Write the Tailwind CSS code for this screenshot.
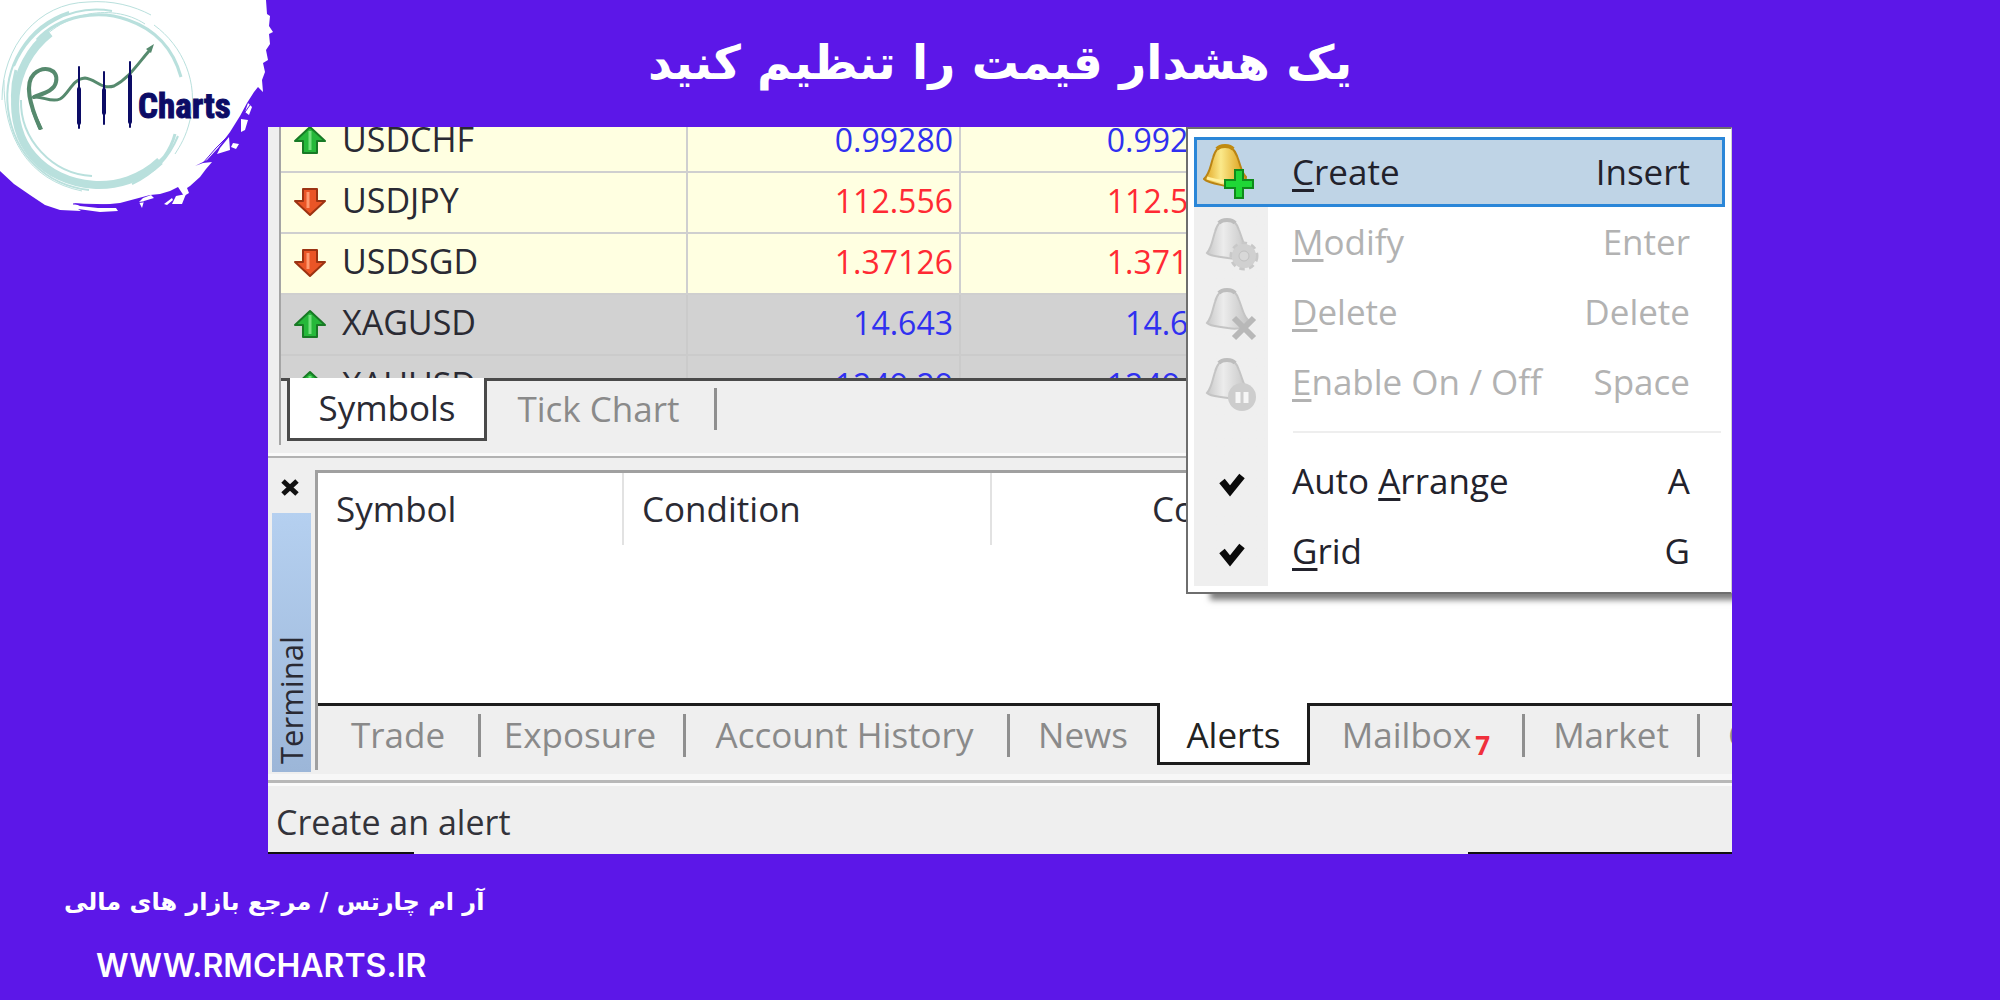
<!DOCTYPE html>
<html lang="fa">
<head>
  <meta charset="UTF-8" />
  <meta name="viewport" content="width=device-width, initial-scale=1.0" />
  <title>یک هشدار قیمت را تنظیم کنید</title>
  <script src="https://cdn.jsdelivr.net/npm/@tailwindcss/browser@4"></script>
</head>
<body class="relative flex min-h-screen flex-col overflow-x-hidden bg-[#5c17e8] font-['Open_Sans',sans-serif] text-[#2a2a33]">

  <!-- Logo -->
  <svg class="absolute left-0 top-0 h-[230px] w-[290px]" viewBox="0 0 290 230" role="img" aria-label="RM Charts">
    <path fill="#fff" d="M0 0H266L267 14L270 16L269 26L273 32L269 34L270 44L266 50L268 60L263 63L265 72L262 80L263 92L258 87L254 92L247 103L240 116L230 132L218 148L207 160L195 166L203 163L212 162L206 169L200 177L190 186L187 188L189 193L184 196L178 187L170 191L160 194L150 195L120 203L100 205L84 204L73 203L80 206L98 208L116 208L118 211L100 212L78 209L81 211L60 210L45 205L30 195L14 184L0 171Z"/>
    <path fill="#fff" d="M248 103l4 4-3 8-4-3zM241 119l7 1-3 10-4 2zM229 137l1 13-13 4 3-6zM233 143l6 1-3 5-5-2zM143 198l8-3 3 3-10 3-2 7-3-6zM164 204l8-6 1 2-6 5zM176 196l10-2-4 10-10 0z"/>
    <path d="M73 204L120 205L150 201L166 197M203 163L216 148L229 135L250 105" fill="none" stroke="#5c17e8"/>
    <g fill="none" stroke="#b9e0dd">
      <path stroke-width="8" d="M50 33C8 66 6 125 33 156C62 190 122 197 160 161"/>
      <path stroke-width="3" d="M37 40C60 15 99 9 128 20C154 29 173 48 181 77M16 70C6 106 18 143 43 164C79 196 134 190 164 157C169 150 173 142 175 134"/>
      <path stroke-width="2" d="M69 12C26 26 3 68 8 109C14 155 46 185 89 190M14 66C31 25 72 4 112 11M21 100C20 139 52 174 92 176M178 136C169 158 153 174 132 184"/>
      <path stroke-width="1" d="M2 100C2 46 38 3 88 2C112 0 134 6 151 15M4 80C3 137 28 180 82 191M154 25C183 46 199 83 190 120C186 137 180 146 175 154M28 57C55 11 112 2 145 24"/>
    </g>
    <g fill="none" stroke="#568a6e" stroke-width="3" stroke-linecap="round">
      <path stroke-width="4" d="M40 128C30 105 24 84 34 74C44 65 59 69 56 82C54 92 40 94 34 97"/>
      <path d="M34 97C43 96 51 103 60 99C69 94 72 79 85 78C96 79 101 90 114 86C128 79 137 65 149 51"/>
    </g>
    <path fill="#568a6e" d="M154 44l-3 9-5-4zM31 110l8 20 4-1-7-15z"/>
    <g stroke="#0c0c66" stroke-linecap="round">
      <path stroke-width="2" d="M79 67V128M104 72V124M130 62V127"/>
      <path stroke-width="4" d="M79 89V123M104 90V113M130 76V122"/>
    </g>
    <text x="138" y="118" fill="#0c0c66" stroke="#0c0c66" class="font-['Roboto_Condensed','Roboto',sans-serif] text-[35px] font-bold">Charts</text>
  </svg>

  <header class="flex h-[127px] items-center justify-center">
    <h1 dir="rtl" class="font-['DejaVu_Sans',sans-serif] text-[47px] font-bold text-white">یک هشدار قیمت را تنظیم کنید</h1>
  </header>

  <main dir="ltr" class="relative mx-[13.4%] overflow-hidden bg-[#efefef] whitespace-nowrap">

    <!-- Market watch -->
    <section class="ml-[11px] border-l-2 border-[#a5a5a5]">
      <div class="h-[251px] overflow-hidden">
        <table class="-mt-4 w-full table-fixed border-collapse text-[32px] leading-[55px]">
          <colgroup><col class="w-[406px]"><col class="w-[273px]"><col class="w-[273px]"><col></colgroup>
          <tbody class="[&_td]:h-[61px] [&_td]:p-0 [&_td]:pb-1">
            <tr class="border-b-2 border-[#cfcfcf] bg-[#ffffe1]">
              <td class="border-r-2 border-[#cfcfcf]"><span class="flex items-center gap-4 pl-[13px] text-[34px]"><svg class="size-8" viewBox="0 0 32 32"><path d="M16 4L31 18H23V30H9V18H1Z" fill="#26b83a" stroke="#187a25" stroke-width="2" stroke-linejoin="round"/><path d="M16 8v19" stroke="#74e07c" stroke-width="3"/></svg>USDCHF</span></td>
              <td class="border-r-2 border-[#cfcfcf]"><div class="pr-1.5 text-right text-[#3030f0]">0.99280</div></td>
              <td><div class="pr-2 text-right text-[#3030f0]">0.99295</div></td><td></td>
            </tr>
            <tr class="border-b-2 border-[#cfcfcf] bg-[#ffffe1]">
              <td class="border-r-2 border-[#cfcfcf]"><span class="flex items-center gap-4 pl-[13px] text-[34px]"><svg class="size-8" viewBox="0 0 32 32"><path d="M16 30L31 16H23V4H9V16H1Z" fill="#ea5526" stroke="#9c3312" stroke-width="2" stroke-linejoin="round"/><path d="M14 7v16" stroke="#ff9a70" stroke-width="3"/></svg>USDJPY</span></td>
              <td class="border-r-2 border-[#cfcfcf]"><div class="pr-1.5 text-right text-[#ff2a33]">112.556</div></td>
              <td><div class="pr-2 text-right text-[#ff2a33]">112.573</div></td><td></td>
            </tr>
            <tr class="border-b-2 border-[#cfcfcf] bg-[#ffffe1]">
              <td class="border-r-2 border-[#cfcfcf]"><span class="flex items-center gap-4 pl-[13px] text-[34px]"><svg class="size-8" viewBox="0 0 32 32"><path d="M16 30L31 16H23V4H9V16H1Z" fill="#ea5526" stroke="#9c3312" stroke-width="2" stroke-linejoin="round"/><path d="M14 7v16" stroke="#ff9a70" stroke-width="3"/></svg>USDSGD</span></td>
              <td class="border-r-2 border-[#cfcfcf]"><div class="pr-1.5 text-right text-[#ff2a33]">1.37126</div></td>
              <td><div class="pr-2 text-right text-[#ff2a33]">1.37156</div></td><td></td>
            </tr>
            <tr class="border-b-2 border-[#cbcbcb] bg-[#d2d2d2]">
              <td class="border-r-2 border-[#cbcbcb]"><span class="flex items-center gap-4 pl-[13px] text-[34px]"><svg class="size-8" viewBox="0 0 32 32"><path d="M16 4L31 18H23V30H9V18H1Z" fill="#26b83a" stroke="#187a25" stroke-width="2" stroke-linejoin="round"/><path d="M16 8v19" stroke="#74e07c" stroke-width="3"/></svg>XAGUSD</span></td>
              <td class="border-r-2 border-[#cbcbcb]"><div class="pr-1.5 text-right text-[#3030f0]">14.643</div></td>
              <td><div class="pr-2 text-right text-[#3030f0]">14.663</div></td><td></td>
            </tr>
            <tr class="bg-[#d2d2d2]">
              <td class="border-r-2 border-[#cbcbcb]"><span class="flex items-center gap-4 pl-[13px] text-[34px]"><svg class="size-8" viewBox="0 0 32 32"><path d="M16 4L31 18H23V30H9V18H1Z" fill="#26b83a" stroke="#187a25" stroke-width="2" stroke-linejoin="round"/><path d="M16 8v19" stroke="#74e07c" stroke-width="3"/></svg>XAUUSD</span></td>
              <td class="border-r-2 border-[#cbcbcb]"><div class="pr-1.5 text-right text-[#3030f0]">1249.29</div></td>
              <td><div class="pr-2 text-right text-[#3030f0]">1249.78</div></td><td></td>
            </tr>
          </tbody>
        </table>
      </div>
      <nav class="flex h-[67px] items-start text-[35px] leading-[56px]">
        <span class="w-1.5 border-t-3 border-[#4a4a4a]"></span>
        <button class="h-[63px] w-[200px] border-3 border-t-0 border-[#4a4a4a] bg-white">Symbols</button>
        <div class="flex flex-1 items-center border-t-3 border-[#4a4a4a]">
          <button class="w-[227px] pr-1 text-[#8a8a8a]">Tick Chart</button>
          <span class="h-[42px] w-[3px] bg-[#8f8f8f]"></span>
        </div>
      </nav>
    </section>
    <div class="mt-2 h-[5px] border-b-2 border-[#b2b2b2] bg-[#fafafa]"></div>

    <!-- Terminal -->
    <section class="flex h-[316px] pt-3">
      <div class="flex w-[47px] flex-col items-center pr-1 pl-1">
        <button class="flex h-[43px] w-full shrink-0 items-center justify-center pb-2 pr-1" aria-label="Close">
          <svg class="size-5" viewBox="0 0 20 20"><path d="M3 3L17 16M17 3L3 16" stroke="#111" stroke-width="5"/></svg>
        </button>
        <div class="flex h-[259px] w-[39px] shrink-0 items-center bg-linear-to-b from-[#b5d0f0] to-[#9cb6d8] text-[31px] leading-[39px]">
          <span class="h-full rotate-180 pt-2 [writing-mode:vertical-rl]">Terminal</span>
        </div>
      </div>
      <div class="mb-1 flex min-w-0 flex-1 flex-col border-l-3 border-t-3 border-[#a0a0a0]">
        <div class="h-[230px] shrink-0 bg-white">
          <table class="w-full table-fixed border-collapse text-[35px] leading-[72px]">
            <thead>
              <tr class="text-left">
                <th class="w-[305px] border-r-2 border-[#e2e2e2] p-0 pl-[18px] font-normal">Symbol</th>
                <th class="w-[368px] border-r-2 border-[#e2e2e2] p-0 pl-[18px] font-normal">Condition</th>
                <th class="w-[300px] p-0 pl-40 font-normal">Counter</th>
                <th class="p-0"></th>
              </tr>
            </thead>
          </table>
        </div>
        <nav class="flex items-start text-[35px] leading-[58px] text-[#8a8a8a]">
          <div class="flex w-[839px] items-center border-t-3 border-[#1c1c1c]">
            <button class="w-[160px]">Trade</button>
            <span class="h-[43px] w-[3px] bg-[#8f8f8f]"></span>
            <button class="w-[202px] pr-1">Exposure</button>
            <span class="h-[43px] w-[3px] bg-[#8f8f8f]"></span>
            <button class="w-[321px] pr-1">Account History</button>
            <span class="h-[43px] w-[3px] bg-[#8f8f8f]"></span>
            <button class="w-[146px]">News</button>
          </div>
          <button class="h-[62px] w-[153px] shrink-0 border-3 border-t-0 border-[#1c1c1c] bg-white pt-[3px] text-[#222]">Alerts</button>
          <div class="flex flex-1 items-center overflow-hidden border-t-3 border-[#1c1c1c]">
            <button class="w-[212px] shrink-0">Mailbox<sub class="pl-1 text-[26px] leading-none font-bold text-[#f0303c]">7</sub></button>
            <span class="h-[43px] w-[3px] shrink-0 bg-[#8f8f8f]"></span>
            <button class="w-[172px] shrink-0">Market</button>
            <span class="h-[43px] w-[3px] shrink-0 bg-[#8f8f8f]"></span>
            <button class="shrink-0 pl-7">Calendar</button>
          </div>
        </nav>
      </div>
    </section>
    <div class="h-1.5 bg-[#f7f7f7]"></div>
    <div class="h-[6px] border-b-3 border-t-3 border-b-[#fafafa] border-t-[#b8b8b8]"></div>

    <!-- Status bar -->
    <div class="px-2 pt-1 text-[34px] leading-[64px] text-[#33333a]">Create an alert</div>
    <div class="absolute bottom-0 left-0 h-0.5 w-[10%] bg-[#111]"></div>
    <div class="absolute bottom-0 right-0 h-0.5 w-[18%] bg-[#111]"></div>

    <!-- Context menu -->
    <div role="menu" class="absolute right-0 top-0 w-[546px] border-2 border-r border-[#6e6e6e] border-r-[#d0d0d0] bg-white px-1.5 pb-1.5 pt-2 text-[35px] leading-[70px] text-[#22222c] shadow-[18px_12px_6px_-6px_rgba(0,0,0,0.5)]">
      <div class="bg-linear-to-r from-[#efefef] from-[74px] to-white to-[74px]">
        <button role="menuitem" class="flex h-[70px] w-full items-center border-3 border-[#2a86d8] bg-[#bfd4e6] pr-8">
          <svg class="ml-1.5 h-16 w-15 shrink-0" viewBox="0 0 60 64">
            <defs>
              <linearGradient id="gold" x1="0" x2="1"><stop offset="0" stop-color="#e0a21c"/><stop offset=".4" stop-color="#fbe98a"/><stop offset="1" stop-color="#d9980f"/></linearGradient>
              <linearGradient id="silver" x1="0" x2="1"><stop offset="0" stop-color="#c9c9c9"/><stop offset=".4" stop-color="#ececec"/><stop offset="1" stop-color="#c4c4c4"/></linearGradient>
            </defs>
            <path d="M22 6C28 6 31 9 34 16C38 26 38 32 43 37C43 45 34 48 23 46C14 44 5 43 1 39C7 33 7 27 10 18C12 10 16 6 22 6Z" fill="url(#gold)" stroke="#b98414" stroke-width="2"/>
            <path d="M14 9C17 5 27 5 30 9" fill="none" stroke="#c08a10" stroke-width="4"/>
            <path d="M4 38C12 40 25 44 38 41" fill="none" stroke="#fff0a0" stroke-width="3"/>
            <path d="M32 30h8v10h10v8H40v10h-8V48H22v-8h10Z" fill="#1fd636" stroke="#0f8a1c" stroke-width="2"/>
          </svg>
          <span class="ml-[29px]"><u class="decoration-3 underline-offset-4">C</u>reate</span><span class="ml-auto">Insert</span>
        </button>
        <button role="menuitem" disabled class="flex h-[70px] w-full items-center pl-[3px] pr-[35px] text-[#b2b2b2]">
          <svg class="ml-1.5 h-16 w-15 shrink-0" viewBox="0 0 60 64">
            <path d="M24 10C30 10 34 13 36 20C40 30 40 35 45 40C45 47 36 50 25 48C16 46 8 47 4 43C9 37 9 31 12 22C14 14 18 10 24 10Z" fill="url(#silver)" stroke="#c4c4c4" stroke-width="2"/>
            <path d="M16 13C19 9 29 9 32 13" fill="none" stroke="#bdbdbd" stroke-width="4"/>
            <circle cx="41" cy="46" r="12" fill="#d6d6d6" stroke="#c8c8c8" stroke-width="5" stroke-dasharray="5 4"/>
            <circle cx="41" cy="46" r="12" fill="#d0d0d0"/><circle cx="41" cy="46" r="5" fill="#d8d8d8" stroke="#c0c0c0"/>
          </svg>
          <span class="ml-[29px]"><u class="decoration-3 underline-offset-4">M</u>odify</span><span class="ml-auto">Enter</span>
        </button>
        <button role="menuitem" disabled class="flex h-[70px] w-full items-center pl-[3px] pr-[35px] text-[#b2b2b2]">
          <svg class="ml-1.5 h-16 w-15 shrink-0" viewBox="0 0 60 64">
            <path d="M24 10C30 10 34 13 36 20C40 30 40 35 45 40C45 47 36 50 25 48C16 46 8 47 4 43C9 37 9 31 12 22C14 14 18 10 24 10Z" fill="url(#silver)" stroke="#c4c4c4" stroke-width="2"/>
            <path d="M16 13C19 9 29 9 32 13" fill="none" stroke="#bdbdbd" stroke-width="4"/>
            <path d="M31 38L51 58M51 38L31 58" stroke="#b8b8b8" stroke-width="6"/>
          </svg>
          <span class="ml-[29px]"><u class="decoration-3 underline-offset-4">D</u>elete</span><span class="ml-auto">Delete</span>
        </button>
        <button role="menuitem" disabled class="flex h-[70px] w-full items-center pl-[3px] pr-[35px] text-[#b2b2b2]">
          <svg class="ml-1.5 h-16 w-15 shrink-0" viewBox="0 0 60 64">
            <path d="M24 10C30 10 34 13 36 20C40 30 40 35 45 40C45 47 36 50 25 48C16 46 8 47 4 43C9 37 9 31 12 22C14 14 18 10 24 10Z" fill="url(#silver)" stroke="#c4c4c4" stroke-width="2"/>
            <path d="M16 13C19 9 29 9 32 13" fill="none" stroke="#bdbdbd" stroke-width="4"/>
            <circle cx="39" cy="47" r="14" fill="#cdcdcd"/><path d="M35 42v11M43 42v11" stroke="#f6f6f6" stroke-width="5"/>
          </svg>
          <span class="ml-[29px]"><u class="decoration-3 underline-offset-4">E</u>nable On / Off</span><span class="ml-auto">Space</span>
        </button>
        <div class="flex h-[29px] items-center pl-[99px] pr-1"><hr class="w-full border-t-2 border-[#eeeeee]"></div>
        <label class="flex h-[70px] w-full items-center pl-[3px] pr-[35px]">
          <input type="checkbox" checked class="peer sr-only">
          <svg class="invisible ml-1.5 h-16 w-15 shrink-0 peer-checked:visible" viewBox="0 0 60 64"><path d="M19 32l8 10L39 27" fill="none" stroke="#0a0a0a" stroke-width="7"/></svg>
          <span class="ml-[29px]">Auto <u class="decoration-3 underline-offset-4">A</u>rrange</span><span class="ml-auto">A</span>
        </label>
        <label class="flex h-[70px] w-full items-center pl-[3px] pr-[35px]">
          <input type="checkbox" checked class="peer sr-only">
          <svg class="invisible ml-1.5 h-16 w-15 shrink-0 peer-checked:visible" viewBox="0 0 60 64"><path d="M19 32l8 10L39 27" fill="none" stroke="#0a0a0a" stroke-width="7"/></svg>
          <span class="ml-[29px]"><u class="decoration-3 underline-offset-4">G</u>rid</span><span class="ml-auto">G</span>
        </label>
      </div>
    </div>
  </main>

  <footer class="ml-16 flex flex-col self-start pt-6 text-white">
    <p dir="rtl" class="font-['DejaVu_Sans',sans-serif] text-[24px] leading-[48px] font-bold">آر ام چارتس / مرجع بازار های مالی</p>
    <a href="#" dir="ltr" class="mt-4 ml-8 font-['Inter',sans-serif] text-[32px] leading-[48px] font-semibold">WWW.RMCHARTS.IR</a>
  </footer>

</body>
</html>
